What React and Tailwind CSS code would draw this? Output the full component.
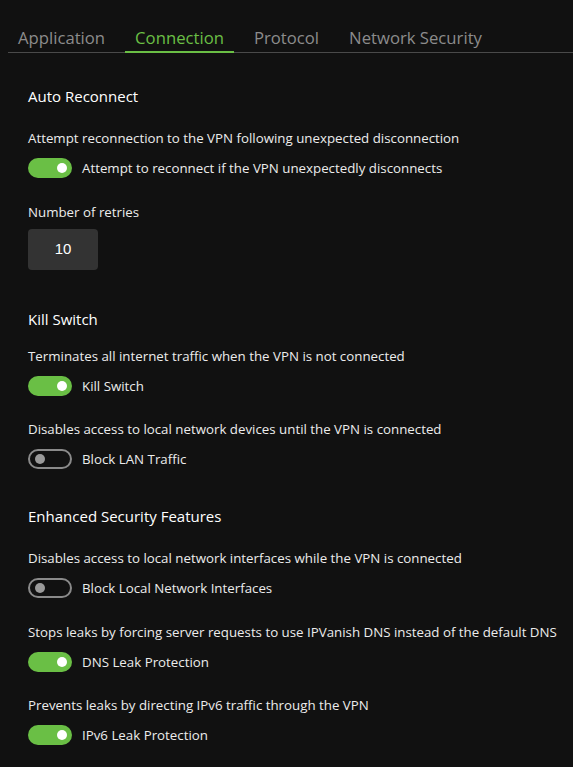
import { useState } from 'react';

const tabs = ['Application', 'Connection', 'Protocol', 'Network Security'];

const Toggle = ({ on }) => (
  <div
    className={`w-[44px] h-[20px] rounded-full flex items-center px-[5px] shrink-0 ${
      on ? 'bg-[#6abf45] justify-end' : 'border-2 border-[#8a8a8a] justify-start px-[3px]'
    }`}
  >
    <div className={`w-[10px] h-[10px] rounded-full ${on ? 'bg-white' : 'bg-[#9a9a9a]'}`} />
  </div>
);

const Setting = ({ desc, label, on }) => (
  <div>
    <p className="text-[13.3px] text-[#ececec] leading-[18px] whitespace-nowrap">{desc}</p>
    <div className="flex items-center mt-[11px]">
      <Toggle on={on} />
      <span className="ml-[10px] text-[13.3px] text-[#ececec] leading-[18px] whitespace-nowrap">{label}</span>
    </div>
  </div>
);

const App = () => {
  const [active] = useState('Connection');

  return (
    <div
      className="w-[573px] h-[767px] bg-[#111111] overflow-hidden"
      style={{ fontFamily: '"Open Sans", "Noto Sans", sans-serif' }}
    >
      <div className="pt-[25px] pl-[8px]">
        <div className="flex gap-[10px] border-b border-[#4a4a4a]">
          {tabs.map((t) => (
            <div
              key={t}
              className={`px-[10px] text-[16.7px] leading-[26px] border-b-2 -mb-px ${
                t === active ? 'text-[#6abf45] border-[#6abf45]' : 'text-[#8c8c8c] border-transparent'
              }`}
            >
              {t}
            </div>
          ))}
        </div>
      </div>

      <div className="px-[28px]">
        <h2 className="text-[15px] text-white mt-[32px] leading-[22px]">Auto Reconnect</h2>
        <div className="mt-[21.5px]">
          <Setting
            desc="Attempt reconnection to the VPN following unexpected disconnection"
            label="Attempt to reconnect if the VPN unexpectedly disconnects"
            on
          />
        </div>
        <p className="text-[13.3px] text-[#ececec] leading-[18px] mt-[25px]">Number of retries</p>
        <div className="mt-[8px] w-[70px] h-[41px] rounded-[4px] bg-[#333333] flex items-center justify-center text-[15px] text-white" style={{ fontFamily: '"Liberation Sans", Arial, sans-serif' }}>
          10
        </div>

        <h2 className="text-[15px] text-white mt-[38.5px] leading-[22px]">Kill Switch</h2>
        <div className="mt-[16.5px] space-y-[24.5px]">
          <Setting desc="Terminates all internet traffic when the VPN is not connected" label="Kill Switch" on />
          <Setting desc="Disables access to local network devices until the VPN is connected" label="Block LAN Traffic" />
        </div>

        <h2 className="text-[15px] text-white mt-[36px] leading-[22px]">Enhanced Security Features</h2>
        <div className="mt-[22px] space-y-[24.5px]">
          <Setting desc="Disables access to local network interfaces while the VPN is connected" label="Block Local Network Interfaces" />
          <Setting desc="Stops leaks by forcing server requests to use IPVanish DNS instead of the default DNS" label="DNS Leak Protection" on />
          <Setting desc="Prevents leaks by directing IPv6 traffic through the VPN" label="IPv6 Leak Protection" on />
        </div>
      </div>
    </div>
  );
};

export default App;
